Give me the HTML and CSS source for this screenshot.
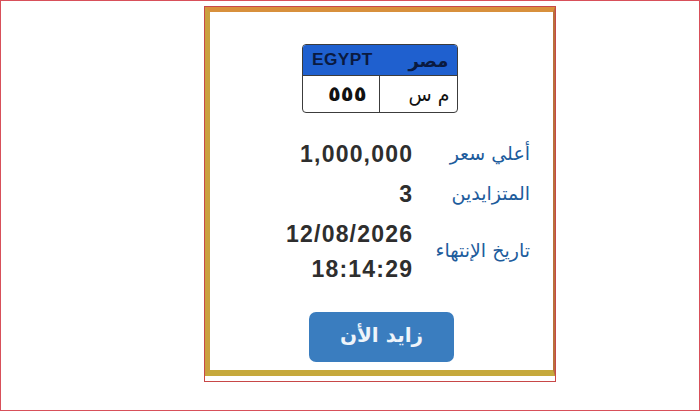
FILE: index.html
```html
<!DOCTYPE html>
<html lang="ar">
<head>
<meta charset="utf-8">
<link rel="stylesheet" href="styles.css">
</head>
<body>
<div class="frame">
  <div class="card">
    <div class="inner">
      <div class="plate">
        <div class="plate-head">
          <span class="egypt">EGYPT</span>
          <span class="misr">مصر</span>
        </div>
        <div class="plate-body">
          <span class="cell num">٥٥٥</span>
          <span class="cell letters">م س</span>
        </div>
      </div>
      <div class="info">
        <div class="val">1,000,000</div>
        <div class="lbl">أعلي سعر</div>
        <div class="val">3</div>
        <div class="lbl">المتزايدين</div>
        <div class="val">12/08/2026<br>18:14:29</div>
        <div class="lbl">تاريخ الإنتهاء</div>
      </div>
      <button class="bid">زايد الأن</button>
    </div>
  </div>
</div>
</body>
</html>
```
FILE: styles.css
```css
html, body {
  margin: 0;
  padding: 0;
  background: #ffffff;
}
body {
  font-family: "Liberation Sans", "DejaVu Sans", sans-serif;
}
.frame {
  width: 700px;
  height: 411px;
  box-sizing: border-box;
  border: 1px solid #d8505a;
  padding: 5px 0 0 203px;
}
.card {
  width: 352px;
  height: 376px;
  box-sizing: border-box;
  border: 1px solid #c84848;
  padding-bottom: 5px;
  background: #fff;
}
.inner {
  height: 100%;
  box-sizing: border-box;
  border-style: solid;
  border-width: 5px 2px 6px 5px;
  border-top-color: #d8903c;
  border-left-color: #caa040;
  border-bottom-color: #c6a93c;
  border-right-color: #b8703c;
  display: flex;
  flex-direction: column;
  align-items: center;
  padding-top: 32px;
}
.plate {
  width: 156px;
  height: 69px;
  box-sizing: border-box;
  border: 1.5px solid #3c3c3c;
  border-radius: 4px;
  overflow: hidden;
  display: flex;
  flex-direction: column;
  margin-left: -4px;
}
.plate-head {
  height: 30px;
  background: #1f60cf;
  border-bottom: 1.5px solid #3c3c3c;
  display: flex;
  justify-content: space-between;
  align-items: center;
  padding: 0 8px 0 9px;
  color: #0a1a40;
  font-weight: bold;
}
.egypt {
  font-size: 16px;
  letter-spacing: 0.4px;
  transform: scaleX(1.08);
  transform-origin: left center;
}
.misr {
  font-size: 18px;
  font-family: "DejaVu Sans", sans-serif;
}
.plate-body {
  flex: 1;
  display: grid;
  grid-template-columns: 1fr 1fr;
}
.cell {
  display: flex;
  align-items: center;
  justify-content: flex-end;
  color: #111;
}
.num {
  border-right: 1.5px solid #3c3c3c;
  padding-right: 12px;
  font-family: "DejaVu Sans", sans-serif;
  font-weight: bold;
  font-size: 21px;
  letter-spacing: 1.5px;
}
.letters {
  padding-right: 7px;
  font-family: "DejaVu Sans", sans-serif;
  font-size: 19px;
  direction: rtl;
  justify-content: flex-start;
}
.info {
  align-self: flex-end;
  margin-right: 23px;
  margin-top: 24px;
  display: grid;
  grid-template-columns: auto 105px;
  column-gap: 13px;
  row-gap: 5px;
  align-items: center;
  justify-items: end;
}
.val {
  font-size: 23px;
  font-weight: bold;
  letter-spacing: 1.2px;
  margin-right: -1.2px;
  color: #2e2e2e;
  line-height: 35px;
  text-align: right;
}
.lbl {
  font-family: "DejaVu Sans", sans-serif;
  font-size: 19px;
  color: #1d5c9c;
  direction: rtl;
  white-space: nowrap;
  margin-top: -4px;
}
.bid {
  margin-top: 25px;
  width: 145px;
  height: 50px;
  border: none;
  border-radius: 7px;
  background: #3a7dbf;
  color: #eef4fa;
  font-family: "DejaVu Sans", sans-serif;
  font-weight: bold;
  font-size: 20px;
  direction: rtl;
  padding: 0 0 4px 0;
}
```
